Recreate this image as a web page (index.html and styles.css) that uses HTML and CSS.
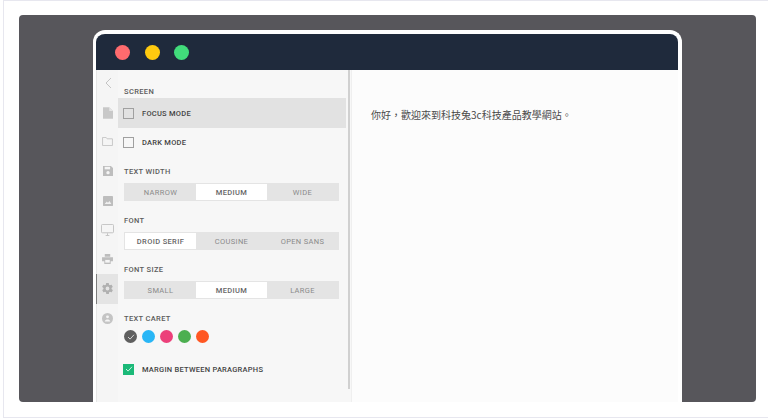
FILE: index.html
```html
<!DOCTYPE html>
<html lang="zh-Hant">
<head>
<meta charset="utf-8">
<title>Settings</title>
<link rel="stylesheet" href="styles.css">
</head>
<body>
<div class="page">
  <div class="stage">
    <div class="window">
      <div class="titlebar">
        <span class="light red"></span><span class="light yellow"></span><span class="light green"></span>
      </div>
      <div class="app">
        <nav class="rail">
          <div class="rail-item"><svg viewBox="0 0 8 12" width="8" height="12"><path d="M7 1 2 6l5 5" fill="none" stroke="#c4c4c4" stroke-width="1"/></svg></div>
          <div class="rail-item"><svg viewBox="0 0 12 14" width="10" height="12"><path d="M0 0h7.500l4.500 4.500V14H0z" fill="#c8c8c8"/><path d="M7.500 0v4.500H12z" fill="#e4e4e4"/></svg></div>
          <div class="rail-item"><svg viewBox="0 0 12 10" width="11" height="9"><path d="M.5 9.500v-9h4l1 1.500h6v7.500z" fill="none" stroke="#c4c4c4"/></svg></div>
          <div class="rail-item"><svg viewBox="0 0 12 12" width="10" height="10"><path d="M0 0h9.500L12 2.500V12H0z" fill="#bdbdbd"/><rect x="2" y="1" width="6.500" height="3" fill="#f5f5f5"/><circle cx="6" cy="8" r="2" fill="#f5f5f5"/></svg></div>
          <div class="rail-item"><svg viewBox="0 0 12 12" width="10" height="10"><rect width="12" height="12" rx="1" fill="#bdbdbd"/><path d="M2 9.500 4.500 6.500 6 8l1.800-2 2.200 3.500z" fill="#f0f0f0"/></svg></div>
          <div class="rail-item"><svg viewBox="0 0 14 13" width="13" height="12"><rect x=".5" y=".5" width="13" height="9" rx="1" fill="none" stroke="#c0c0c0"/><path d="M5 12.500h4M7 10v2.500" stroke="#c0c0c0"/></svg></div>
          <div class="rail-item"><svg viewBox="0 0 12 11" width="11" height="10"><path d="M3 0h6v3H3zM0 3.500h12V8H9.500v3h-7V8H0z" fill="#bdbdbd"/><rect x="3.500" y="6.500" width="5" height="3" fill="#f5f5f5"/></svg></div>
          <div class="rail-item active"><svg viewBox="0 0 24 24" width="13" height="13"><path fill="#b0b0b0" d="M19.400 13c.1-.3.100-.7.100-1s0-.7-.1-1l2.100-1.600c.2-.1.200-.4.100-.6l-2-3.500c-.1-.2-.4-.3-.6-.2l-2.500 1c-.5-.4-1.100-.7-1.700-1l-.4-2.700c0-.2-.2-.4-.5-.4h-4c-.2 0-.4.200-.5.400l-.4 2.700c-.6.300-1.200.6-1.700 1l-2.500-1c-.2-.1-.5 0-.6.200l-2 3.500c-.1.200-.1.500.1.600L4.600 11c0 .3-.1.700-.1 1s0 .7.100 1l-2.100 1.600c-.2.100-.2.400-.1.600l2 3.500c.1.200.4.300.6.200l2.500-1c.5.400 1.100.7 1.700 1l.4 2.700c0 .2.200.4.500.4h4c.2 0 .4-.2.500-.4l.4-2.700c.6-.3 1.200-.6 1.700-1l2.500 1c.2.100.5 0 .6-.2l2-3.500c.1-.2.100-.5-.1-.6zM12 15.500a3.500 3.500 0 1 1 0-7 3.500 3.500 0 0 1 0 7z"/></svg></div>
          <div class="rail-item"><svg viewBox="0 0 12 12" width="11" height="11"><circle cx="6" cy="6" r="6" fill="#c4c4c4"/><circle cx="6" cy="4.200" r="1.600" fill="#f5f5f5"/><path d="M3 9.200c.4-1.500 1.600-2.200 3-2.200s2.600.7 3 2.200z" fill="#f5f5f5"/></svg></div>
        </nav>
        <section class="panel">
          <span class="thumb"></span>
          <h3 class="label first">SCREEN</h3>
          <div class="row selected"><span class="check"></span><span class="row-text">FOCUS MODE</span></div>
          <div class="row plain"><span class="check"></span><span class="row-text">DARK MODE</span></div>
          <h3 class="label">TEXT WIDTH</h3>
          <div class="seg"><span>NARROW</span><span class="on">MEDIUM</span><span>WIDE</span></div>
          <h3 class="label">FONT</h3>
          <div class="seg"><span class="on">DROID SERIF</span><span>COUSINE</span><span>OPEN SANS</span></div>
          <h3 class="label">FONT SIZE</h3>
          <div class="seg"><span>SMALL</span><span class="on">MEDIUM</span><span>LARGE</span></div>
          <h3 class="label">TEXT CARET</h3>
          <div class="carets">
            <span class="caret c1"><svg viewBox="0 0 10 8" width="8" height="6"><path d="M1 4l2.800 2.800L9 1" fill="none" stroke="#e0e0e0" stroke-width="1.200"/></svg></span>
            <span class="caret c2"></span><span class="caret c3"></span><span class="caret c4"></span><span class="caret c5"></span>
          </div>
          <div class="row margin"><span class="check on"><svg viewBox="0 0 10 8" width="8" height="6"><path d="M1 4l2.800 2.800L9 1" fill="none" stroke="#e8fff4" stroke-width="1.100"/></svg></span><span class="row-text">MARGIN BETWEEN PARAGRAPHS</span></div>
        </section>
        <main class="content">
          <p class="greeting">你好&#xFF0C;歡迎來到科技兔3c科技產品教學網站。</p>
        </main>
      </div>
    </div>
  </div>
</div>
</body>
</html>
```

FILE: styles.css
```css
* { box-sizing: border-box; }
html, body { margin: 0; height: 100%; background: #fff; }
body { overflow: hidden; }
.page {
  width: 768px; height: 418px;
  margin-left: 3px;
  padding: 14px 9px 14px 15px;
  border-top: 1px solid #e7e7ef;
  border-bottom: 1px solid #e7e7ef;
  border-left: 1px solid #e7e7ef;
  background: #fff;
}
.stage {
  width: 737px; height: 387px;
  padding: 15px 74px 0 74px;
  background: #57565b;
  border-radius: 4px;
}
.window {
  height: 372px; width: 589px;
  display: flex; flex-direction: column;
  border: 4px solid #fff; border-left-width: 3px; border-bottom: 0;
  border-radius: 12px 12px 0 0;
  overflow: hidden;
  background: #fff;
}
.titlebar {
  flex: 0 0 36px;
  display: flex; align-items: center; gap: 14.500px;
  padding-left: 19px;
  background: #1f2a3c;
}
.light { width: 15px; height: 15px; border-radius: 50%; }
.red { background: #ff6b6e; }
.yellow { background: #ffca0f; }
.green { background: #41dc7b; }
.app { flex: 1; display: flex; min-height: 0; font-family: Roboto, sans-serif; }
.rail {
  flex: 0 0 22px;
  background: #f5f5f5;
  border-left: 1px solid #e6e6e6;
  display: flex; flex-direction: column;
}
.rail-item {
  height: 29.300px; flex: none;
  display: flex; align-items: center; justify-content: center;
}
.rail-item:first-child { height: 26px; }
.rail-item:nth-child(2) { margin-top: 2px; }
.rail-item.active {
  background: #e4e4e4;
  border-left: 1px solid #7d7d7d;
  margin-left: -1px; width: 22px;
  height: 30px;
}
.panel {
  flex: 0 0 234px;
  position: relative;
  background: #f7f7f7;
  border-right: 1px solid #efefef;
  padding-right: 5px;
  display: flex; flex-direction: column;
}
.thumb {
  position: absolute; top: 0; right: 1px;
  width: 2px; height: 319px;
  background: #d0d0d0;
}
.label {
  margin: 15px 0 6px 6px;
  font-size: 7.500px; line-height: 10px; font-weight: 500;
  letter-spacing: .35px; color: #5c5c5c;
}
.label.first { margin-top: 17px; margin-bottom: 1px; }
.row {
  height: 30px; flex: none;
  display: flex; align-items: center;
  padding-left: 5px; gap: 8px;
}
.row.selected { background: #e2e2e2; }
.row.plain { height: 29px; }
.row + .label { margin-top: 10px; }
.check {
  width: 11px; height: 11px; flex: none;
  border: 1px solid #a0a0a0; background: transparent;
  display: flex; align-items: center; justify-content: center;
}
.check.on { background: #1bb978; border-color: #1bb978; }
.row-text {
  font-size: 7.500px; font-weight: 500; letter-spacing: .25px; color: #444;
}
.seg {
  margin-left: 6px; width: 215px; height: 18px;
  display: grid; grid-template-columns: repeat(3, 1fr);
  padding: 1px;
  background: #e4e4e4;
  font-size: 7.500px; font-weight: 400; letter-spacing: .35px; color: #8a8a8a;
}
.seg span { display: flex; align-items: center; justify-content: center; }
.seg .on { background: #fff; color: #666; font-weight: 500; }
.carets { display: flex; gap: 5px; margin: 0 0 0 6px; }
.caret {
  width: 13px; height: 13px; border-radius: 50%;
  display: flex; align-items: center; justify-content: center;
}
.c1 { background: #5f5f5f; }
.c2 { background: #29b6f6; }
.c3 { background: #ec407a; }
.c4 { background: #4caf50; }
.c5 { background: #ff5722; }
.row.margin { margin-top: 11px; }
.content { flex: 1; background: #fcfcfc; padding: 39px 0 0 19px; }
.greeting {
  margin: 0;
  font-family: "Noto Sans CJK TC", "Liberation Serif", serif;
  font-size: 10px; line-height: 12px; color: #4a4a4a;
}
```
